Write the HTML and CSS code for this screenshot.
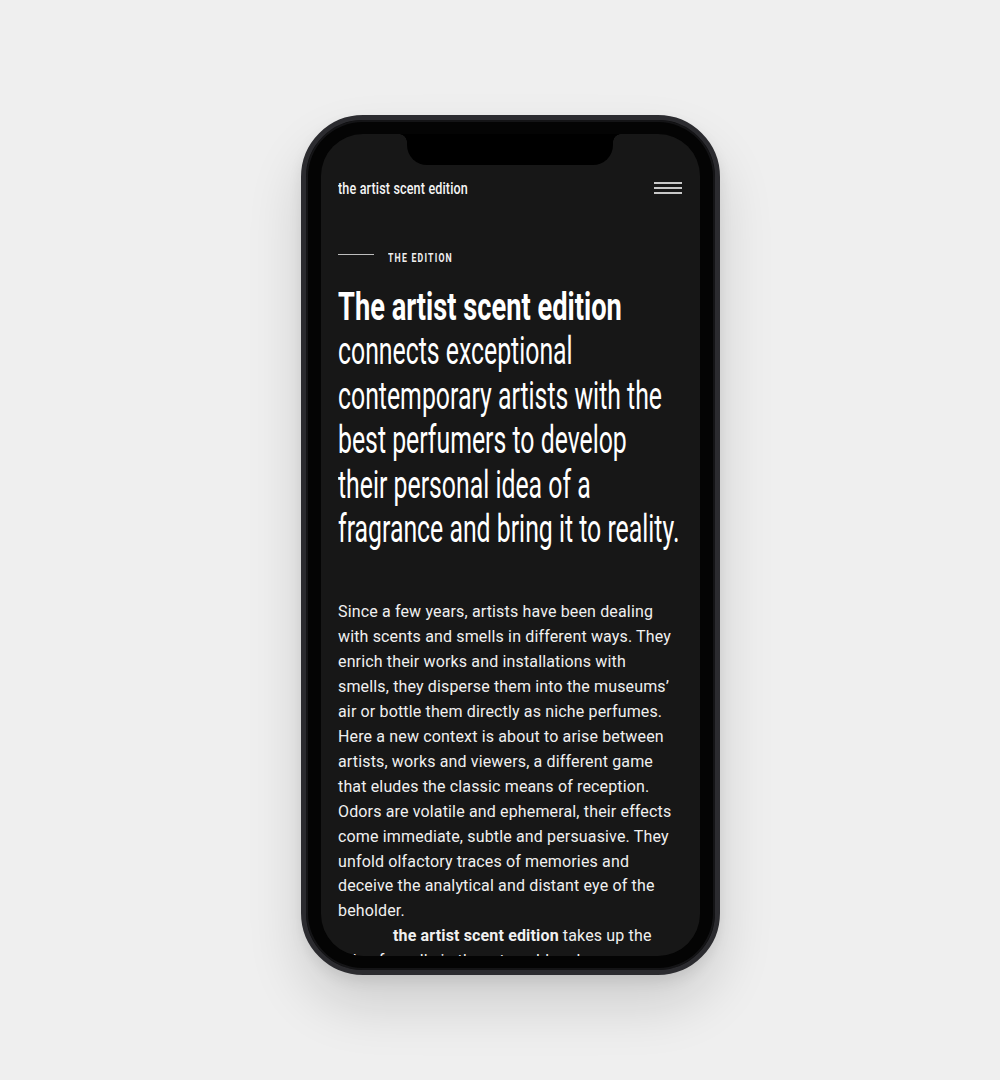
FILE: index.html
```html
<!DOCTYPE html>
<html lang="en">
<head>
<meta charset="utf-8">
<title>the artist scent edition</title>
<link rel="stylesheet" href="styles.css">
</head>
<body>
<div class="stage">
  <div class="phone">
    <div class="screen">
      <div class="notch"></div>
      <header class="topbar">
        <span class="logo">the artist scent edition</span>
        <button class="menu" aria-label="Menu"><span></span><span></span><span></span></button>
      </header>
      <main class="content">
        <div class="eyebrow">
          <span class="rule"></span>
          <span class="eyebrow-text">THE EDITION</span>
        </div>
        <h1 class="headline"><strong>The artist scent edition</strong><br>connects exceptional<br>contemporary artists with the<br>best perfumers to develop<br>their personal idea of a<br>fragrance and bring it to reality.</h1>
        <p class="copy">Since a few years, artists have been dealing<br>with scents and smells in different ways. They<br>enrich their works and installations with<br>smells, they disperse them into the museums’<br>air or bottle them directly as niche perfumes.<br>Here a new context is about to arise between<br>artists, works and viewers, a different game<br>that eludes the classic means of reception.<br>Odors are volatile and ephemeral, their effects<br>come immediate, subtle and persuasive. They<br>unfold olfactory traces of memories and<br>deceive the analytical and distant eye of the<br>beholder.</p>
        <p class="copy indent"><strong>the artist scent edition</strong> takes up the<br>role of smells in the art world and</p>
      </main>
    </div>
  </div>
</div>
</body>
</html>
```
FILE: styles.css
```css
html, body {
  margin: 0;
  padding: 0;
}

body {
  background: #efefef;
  font-family: Roboto, "Liberation Sans", sans-serif;
  width: 1000px;
  height: 1080px;
  overflow: hidden;
}

.stage {
  padding: 115px 0 0 301px;
}

.phone {
  width: 419px;
  height: 860px;
  box-sizing: border-box;
  border: 5px solid #2b2b2f;
  border-radius: 62px;
  background: #040404;
  padding: 14px 15px;
  box-shadow: 0 30px 55px rgba(0, 0, 0, 0.14), 0 6px 14px rgba(0, 0, 0, 0.08), inset 0 0 0 2px #141416;
}

.screen {
  position: relative;
  width: 379px;
  height: 822px;
  border-radius: 42px;
  background: #171717;
  overflow: hidden;
  padding: 0 18px 0 17px;
  box-sizing: border-box;
  color: #f2f2f2;
}

.notch {
  position: absolute;
  top: 0;
  left: 86px;
  width: 206px;
  height: 31px;
  background: #000;
  border-radius: 0 0 20px 20px;
}

.notch::before,
.notch::after {
  content: "";
  position: absolute;
  top: 0;
  width: 8px;
  height: 8px;
}

.notch::before {
  left: -8px;
  background: radial-gradient(circle at 0 100%, transparent 7.5px, #000 8px);
}

.notch::after {
  right: -8px;
  background: radial-gradient(circle at 100% 100%, transparent 7.5px, #000 8px);
}

.topbar {
  display: flex;
  align-items: center;
  justify-content: space-between;
  height: 20px;
  padding-top: 44px;
}

.logo {
  display: inline-block;
  font-size: 17px;
  line-height: 20px;
  font-weight: 500;
  letter-spacing: 0.2px;
  white-space: nowrap;
  transform: scaleX(0.74);
  transform-origin: 0 50%;
  color: #f4f4f4;
}

.menu {
  display: flex;
  flex-direction: column;
  gap: 3.6px;
  width: 28px;
  padding: 0;
  margin: 0;
  border: 0;
  background: none;
}

.menu span {
  display: block;
  height: 1.8px;
  background: #c8c8c8;
}

.content {
  display: flex;
  flex-direction: column;
}

.eyebrow {
  display: flex;
  align-items: flex-start;
  gap: 14px;
  height: 14px;
  margin-top: 53px;
}

.rule {
  width: 36px;
  height: 1.5px;
  margin-top: 2.5px;
  background: #bdbdbd;
}

.eyebrow-text {
  display: inline-block;
  font-size: 13px;
  line-height: 14px;
  font-weight: 700;
  letter-spacing: 1.8px;
  white-space: nowrap;
  transform: scaleX(0.67);
  transform-origin: 0 50%;
  color: #f0f0f0;
}

.headline {
  margin: 20px 0 0;
  font-size: 38px;
  line-height: 44.4px;
  font-weight: 400;
  white-space: nowrap;
  transform: scaleX(0.653);
  transform-origin: 0 0;
  color: #ffffff;
}

.headline strong {
  display: inline-block;
  font-weight: 700;
  transform: scaleX(1.098);
  transform-origin: 0 0;
}

.copy {
  margin: 0;
  font-size: 16px;
  line-height: 24.9px;
  letter-spacing: 0.15px;
  white-space: nowrap;
  color: #f0f0f0;
}

.content .copy:first-of-type {
  margin-top: 49px;
}

.copy strong {
  font-weight: 700;
}

.indent {
  text-indent: 55px;
}
```
